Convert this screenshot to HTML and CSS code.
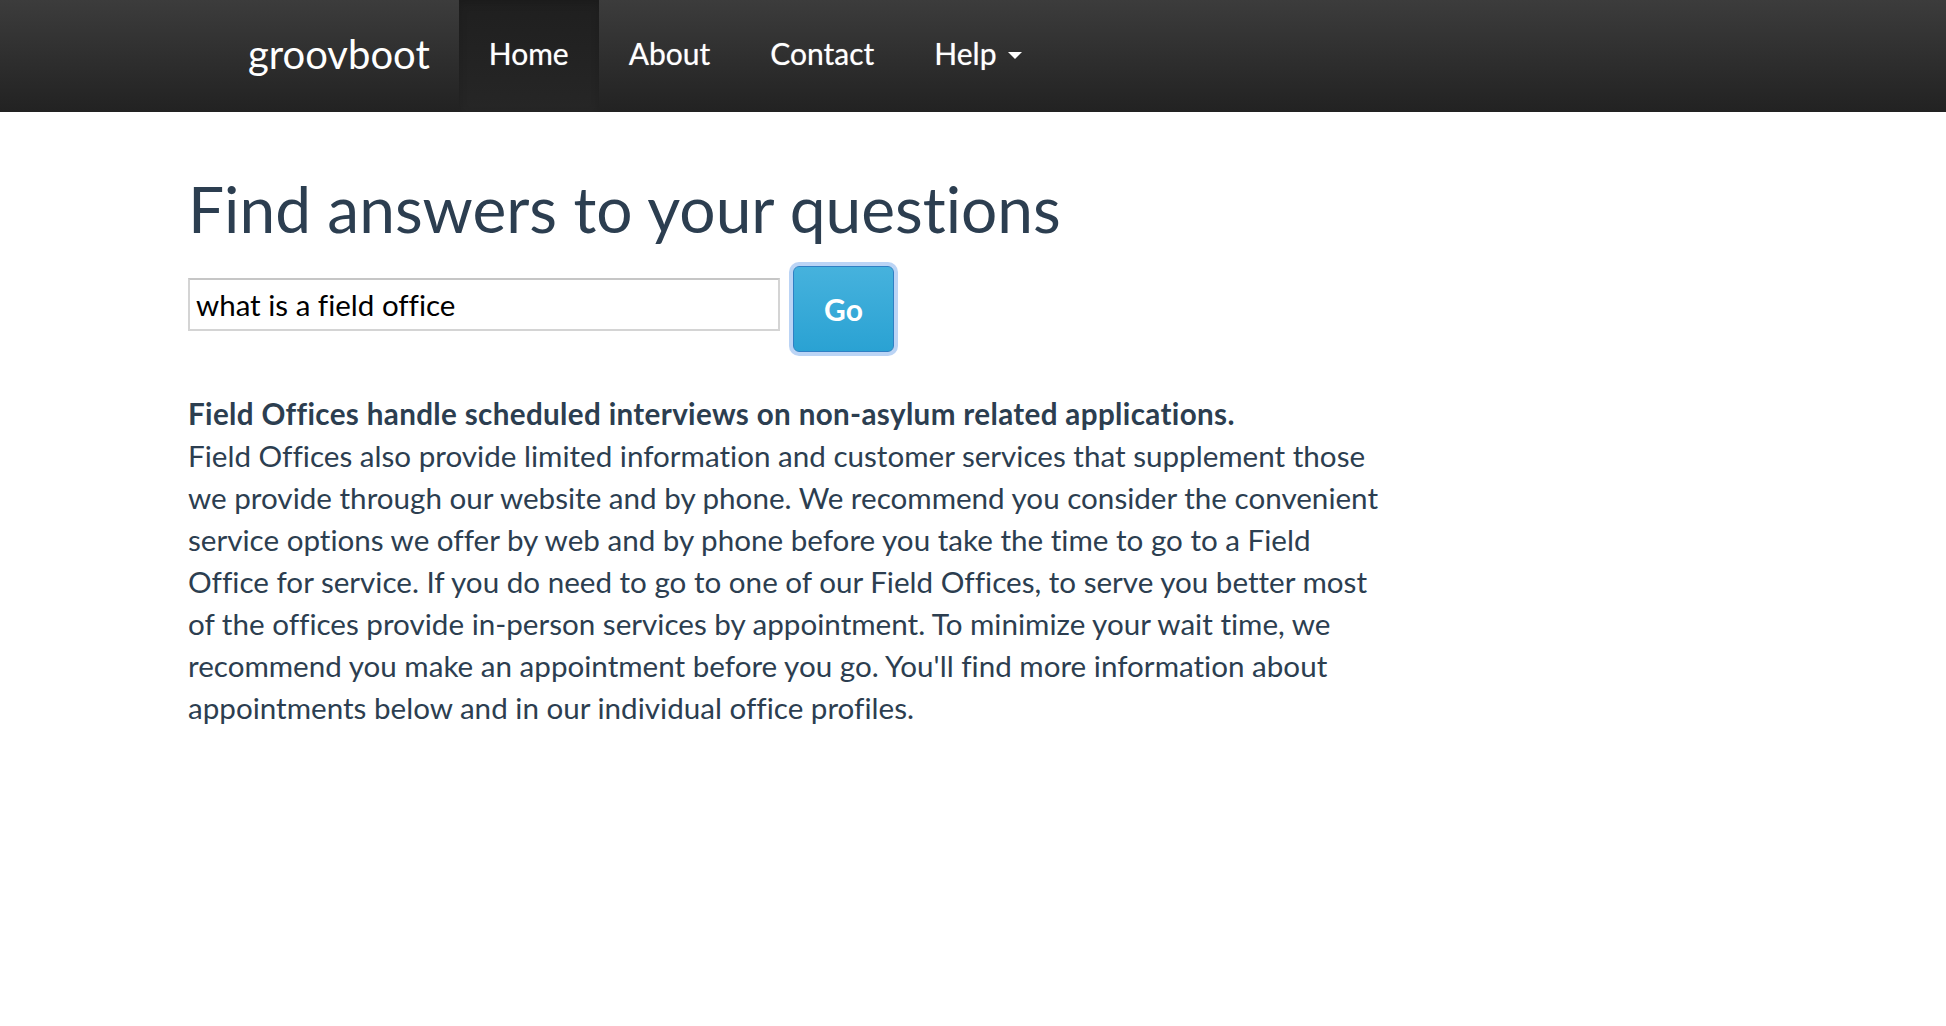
FILE: index.html
```html
<!DOCTYPE html>
<html lang="en">
<head>
<meta charset="utf-8">
<title>groovboot</title>
<link rel="stylesheet" href="styles.css">
</head>
<body>
<header class="navbar">
  <div class="navbar-inner">
    <a class="brand" href="#">groovboot</a>
    <nav class="nav">
      <a class="nav-link active" href="#">Home</a>
      <a class="nav-link" href="#">About</a>
      <a class="nav-link" href="#">Contact</a>
      <a class="nav-link dropdown" href="#">Help<span class="caret"></span></a>
    </nav>
  </div>
</header>
<main class="container">
  <h1 class="title">Find answers to your questions</h1>
  <form class="search">
    <input class="search-input" type="text" value="what is a field office">
    <button class="btn-go" type="button">Go</button>
  </form>
  <p class="answer"><strong>Field Offices handle scheduled interviews on non-asylum related applications.</strong><br>Field Offices also provide limited information and customer services that supplement those<br>we provide through our website and by phone. We recommend you consider the convenient<br>service options we offer by web and by phone before you take the time to go to a Field<br>Office for service. If you do need to go to one of our Field Offices, to serve you better most<br>of the offices provide in-person services by appointment. To minimize your wait time, we<br>recommend you make an appointment before you go. You'll find more information about<br>appointments below and in our individual office profiles.</p>
</main>
</body>
</html>
```
FILE: styles.css
```css
* { box-sizing: border-box; }
html, body { margin: 0; padding: 0; background: #fff; }
body {
  font-family: Lato, "Open Sans", "Liberation Sans", sans-serif;
  color: #2c3e50;
  font-variant-ligatures: none;
}

.navbar {
  height: 112px;
  background: linear-gradient(to bottom, #3c3c3c 0%, #222222 100%);
}
.navbar-inner {
  display: flex;
  align-items: stretch;
  height: 100%;
  padding-left: 217px;
}
.brand {
  display: flex;
  align-items: center;
  padding: 0 29px 4px 31px;
  font-size: 40px;
  color: #ffffff;
  text-decoration: none;
}
.nav { display: flex; align-items: stretch; }
.nav-link {
  display: flex;
  align-items: center;
  padding: 0 30px 6px;
  font-size: 30px;
  color: #ffffff;
  text-decoration: none;
  text-shadow: 0 0 1px rgba(255,255,255,0.6);
}
.nav-link.active {
  background: linear-gradient(to bottom, #1f1f1f 0%, #262626 100%);
  box-shadow: inset 0 3px 8px rgba(0,0,0,0.15);
}
.caret {
  display: inline-block;
  width: 0;
  height: 0;
  margin-left: 12px;
  margin-top: 4px;
  border-top: 7px solid #ffffff;
  border-left: 7px solid transparent;
  border-right: 7px solid transparent;
}

.container { padding-left: 188px; }
.title {
  margin: 58px 0 0;
  font-size: 64px;
  font-weight: 400;
  line-height: 78px;
  color: #2c3e50;
}
.search {
  display: flex;
  align-items: flex-start;
  margin-top: 18px;
  gap: 13px;
}
.search-input {
  width: 592px;
  height: 53px;
  margin-top: 12px;
  padding: 0 6px;
  border: 2px solid #d4d4d4;
  border-top-color: #c6c6c6;
  font-family: Lato, "Open Sans", sans-serif;
  font-variant-ligatures: none;
  font-size: 29.5px;
  color: #000;
  background: #fff;
  outline: none;
}
.btn-go {
  width: 101px;
  height: 86px;
  border: 1px solid #2f80c4;
  border-radius: 6px;
  background: linear-gradient(to bottom, #46b2dd 0%, #2aa2d3 100%);
  box-shadow: 0 0 0 4px rgba(120, 170, 235, 0.5);
  color: #ffffff;
  font-family: Lato, "Open Sans", sans-serif;
  font-size: 30px;
  font-weight: 700;
  padding: 0;
  cursor: pointer;
}
.answer {
  margin: 41px 0 0;
  font-size: 29.6px;
  line-height: 42px;
  white-space: nowrap;
  color: #2c3e50;
}
.answer strong { font-weight: 700; letter-spacing: 0.35px; }
```
